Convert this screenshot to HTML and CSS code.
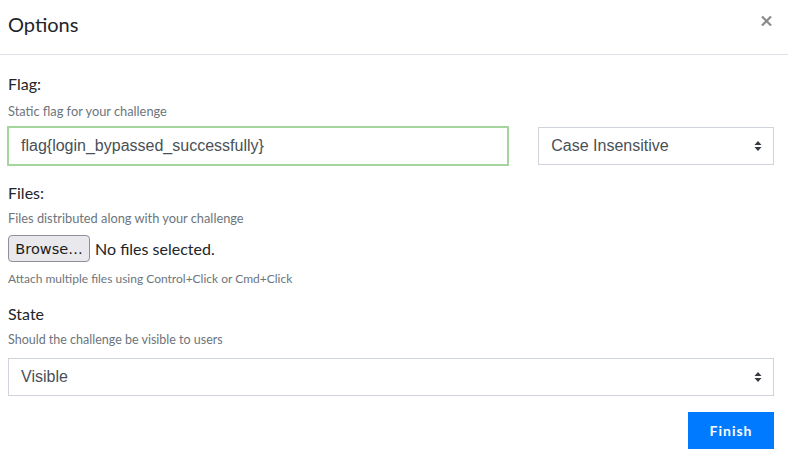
FILE: index.html
```html
<!DOCTYPE html>
<html>
<head>
<meta charset="utf-8">
<link rel="stylesheet" href="styles.css">
</head>
<body>
<div class="modal">
  <div class="modal-header">
    <h5 class="title">Options</h5>
    <span class="close"><svg width="11" height="10" viewBox="0 0 11 10"><path d="M1 0.5 L10 9.5 M10 0.5 L1 9.5" stroke="#8a8a8a" stroke-width="2.2"/></svg></span>
  </div>
  <div class="modal-body">
    <div class="group">
      <label class="label">Flag:</label>
      <small class="help h-flag">Static flag for your challenge</small>
      <div class="row">
        <div class="input focus flag-input">flag{login_bypassed_successfully}</div>
        <div class="input select flag-type">Case Insensitive<span class="arrows"><svg width="8" height="12" viewBox="0 0 8 12"><path d="M4 1 L7.5 5 H0.5 Z M4 11 L7.5 7 H0.5 Z" fill="#343a40"/></svg></span></div>
      </div>
    </div>
    <div class="group files">
      <label class="label">Files:</label>
      <small class="help h-files">Files distributed along with your challenge</small>
      <div class="file-row"><span class="browse">Browse…</span><span class="nofile">No files selected.</span></div>
      <small class="help tiny">Attach multiple files using Control+Click or Cmd+Click</small>
    </div>
    <div class="group state">
      <label class="label">State</label>
      <small class="help h-state">Should the challenge be visible to users</small>
      <div class="input select full">Visible<span class="arrows"><svg width="8" height="12" viewBox="0 0 8 12"><path d="M4 1 L7.5 5 H0.5 Z M4 11 L7.5 7 H0.5 Z" fill="#343a40"/></svg></span></div>
    </div>
    <div class="footer"><span class="btn">Finish</span></div>
  </div>
</div>
</body>
</html>
```
FILE: styles.css
```css
html, body { margin: 0; padding: 0; background: #fff; }
body { font-family: Lato, "Open Sans", sans-serif; color: #212529; }
.modal { width: 788px; }
.modal-header {
  display: flex; align-items: center; justify-content: space-between;
  height: 55px; box-sizing: border-box;
  padding: 0 16px 0 8px;
  border-bottom: 1px solid #dee2e6;
}
.title { margin: 0; font-size: 20px; font-weight: 400; line-height: 1; padding-bottom: 7px; }
.close { display: flex; margin-top: -13px; }
.modal-body { padding: 19px 14px 0 8px; }
.group { display: flex; flex-direction: column; }
.label { font-size: 16px; line-height: 20px; }
.help { font-size: 12.8px; color: #6c757d; line-height: 16px; margin-top: 5px; }
.h-flag { margin-top: 9px; }
.h-files { margin-top: 7px; }
.h-state { margin-top: 8px; font-size: 12.5px; }
.row { display: flex; gap: 30px; margin-top: 8px; }
.input {
  box-sizing: border-box; height: 38px; border: 1px solid #ced4da;
  font-family: "Liberation Sans", Arial, sans-serif; font-size: 16px; color: #495057;
  display: flex; align-items: center; padding: 0 12px;
}
.focus { border: 2px solid #a3d59c; height: 40px; margin: -1px; padding-left: 12px; }
.flag-input { width: 503px; }
.flag-type { width: 236px; justify-content: space-between; }
.arrows { display: flex; margin-right: -1px; }
.files { margin-top: 18px; }
.file-row { display: flex; align-items: center; margin-top: 9px; }
.browse {
  box-sizing: border-box; height: 27px; width: 82px;
  border: 1px solid #8f8f9d; border-radius: 4px; background: #e9e9ed;
  font-family: "DejaVu Sans", sans-serif; font-size: 14.5px; color: #1b1b1b;
  display: flex; align-items: center; justify-content: center;
}
.nofile { font-size: 16px; margin-left: 5px; }
.tiny { font-size: 12px; margin-top: 9px; }
.state { margin-top: 17px; }
.full { width: 766px; justify-content: space-between; margin-top: 10px; }
.footer { display: flex; justify-content: flex-end; margin-top: 16px; }
.btn {
  width: 86px; height: 37px; background: #007bff; color: #fff;
  font-weight: 700; font-size: 14px; letter-spacing: 1px;
  display: flex; align-items: center; justify-content: center;
}
```
